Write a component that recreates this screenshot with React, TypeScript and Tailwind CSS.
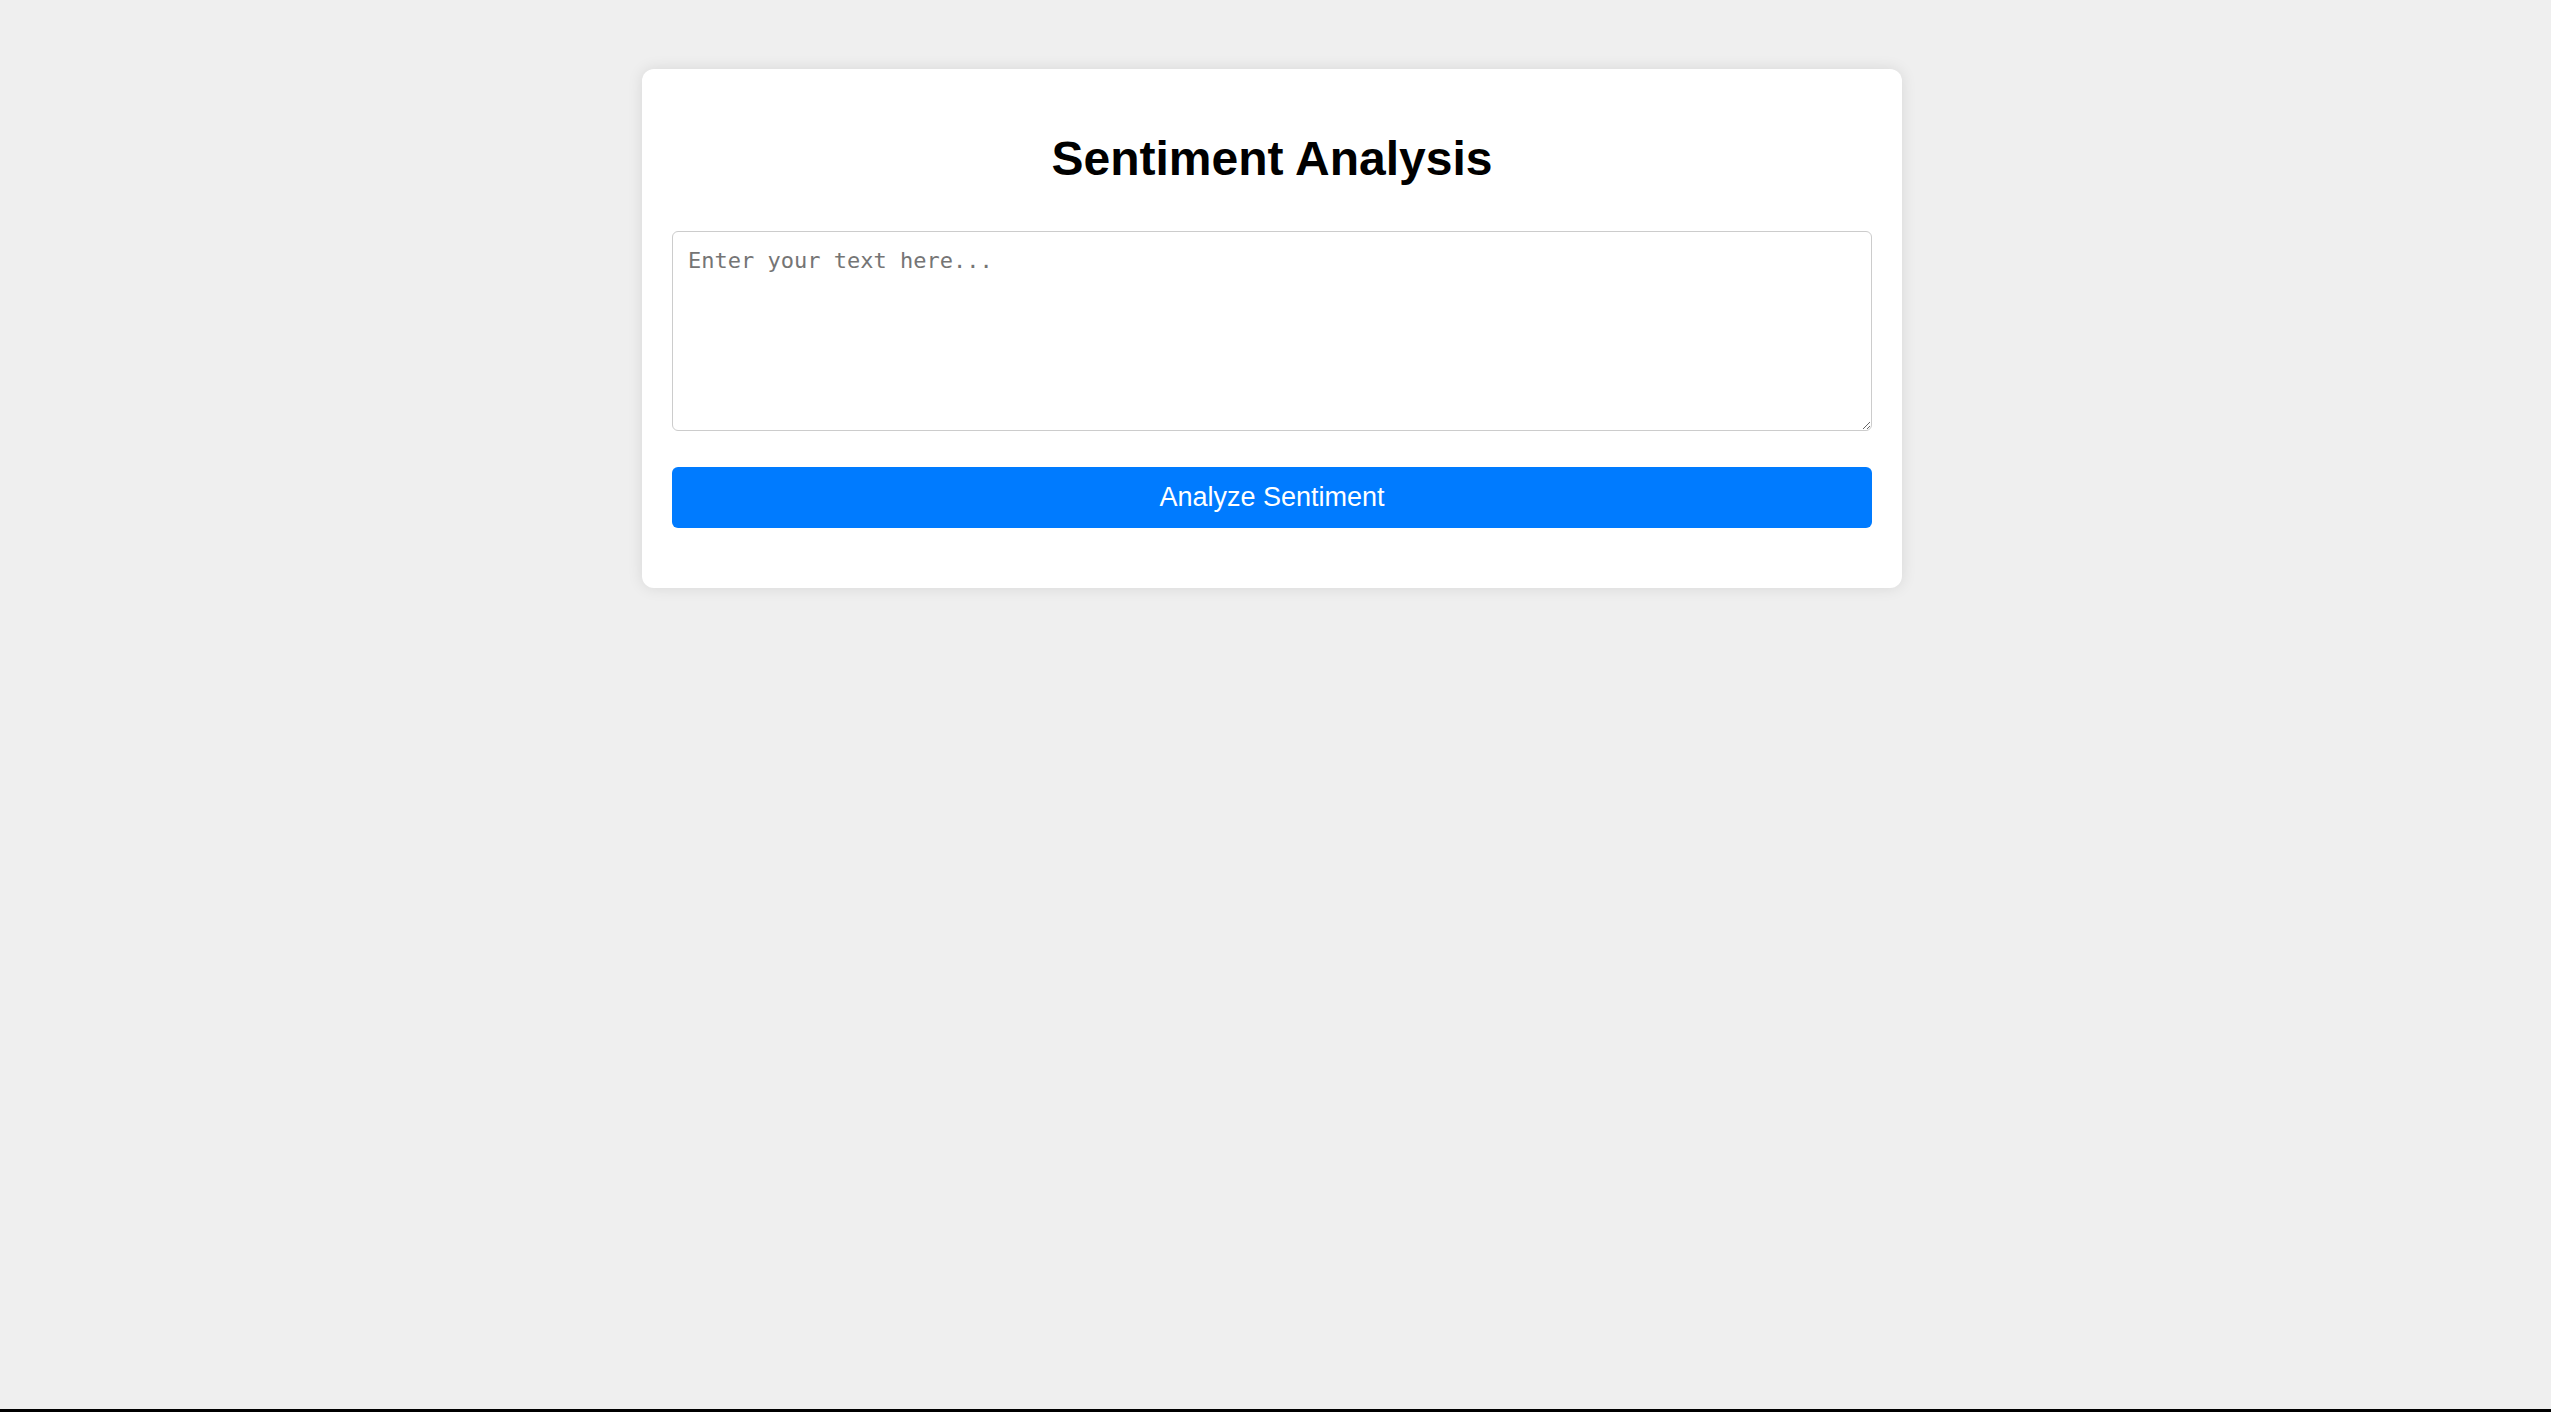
export default function App() {
  return (
    <div className="min-h-screen flex flex-col bg-[#efefef] font-['Liberation_Sans',Arial,sans-serif]">
      <div className="flex-1 flex justify-center pt-[69px] pr-[7px]">
        <div className="w-[1260px] self-start bg-white rounded-[12px] shadow-[0_0_15px_rgba(0,0,0,0.1)] p-[30px]">
          <h1 className="mt-[32px] mb-[45px] text-center text-[48px] leading-[55px] font-bold text-black">
            Sentiment Analysis
          </h1>

          <textarea
            className="block w-full h-[200px] border border-[#cccccc] rounded-[6px] px-[15px] pt-[15px] pb-[15px] text-[22px] leading-[27px] font-['DejaVu_Sans_Mono',monospace] text-black placeholder:text-[#757575] outline-none"
            placeholder="Enter your text here..."
          />

          <button className="mt-[36px] mb-[30px] block w-full h-[61px] rounded-[6px] bg-[#007bff] text-white text-[27px] leading-[61px]">
            Analyze Sentiment
          </button>
        </div>
      </div>
      <div className="h-[3px] bg-black" />
    </div>
  );
}
